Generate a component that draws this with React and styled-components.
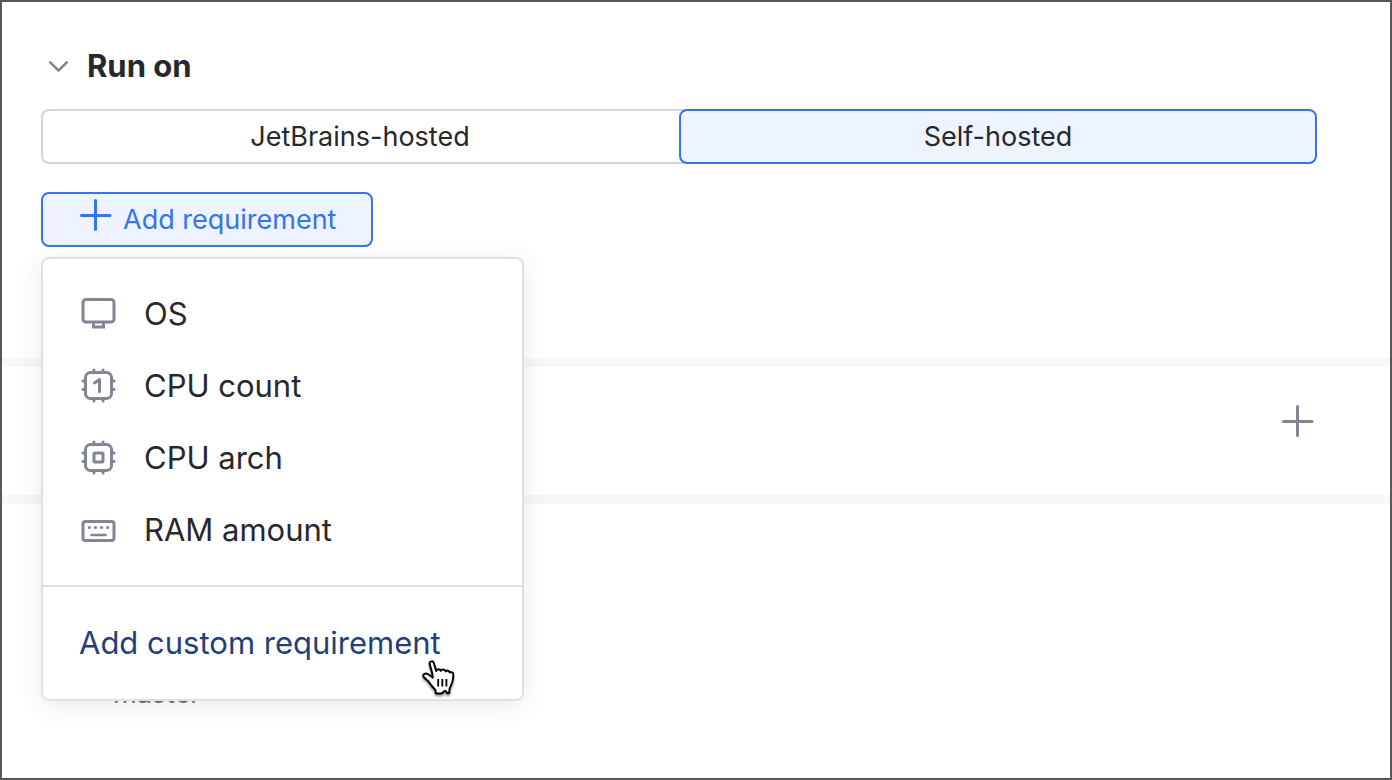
import React from 'react';
import styled, { createGlobalStyle } from 'styled-components';

const GlobalStyle = createGlobalStyle`
    * {
      box-sizing: border-box;
    }

    body {
      margin: 0;
      background-color: white;
      color: #27282c;
      font-family: Inter, "Liberation Sans", sans-serif;
    }

    button {
      margin: 0;
      padding: 0;
      border: none;
      background: none;
      color: inherit;
      font: inherit;
      cursor: pointer;
    }
`;

const Page = styled.main`
    display: flex;
    flex-direction: column;
    min-height: 100vh;
    border: 2px solid #58585b;
`;

const Section = styled.section`
    padding: ${(props) => props.$padding};
    border-bottom: ${(props) => (props.$last ? 'none' : '9px solid #f6f7f9')};
`;

const SectionHeader = styled.button`
    display: flex;
    align-items: center;
    gap: 16px;
    padding-left: 6px;
`;

const Title = styled.h2`
    margin: 0;
    font-size: 31px;
    line-height: 40px;
    font-weight: 700;
`;

const Segments = styled.div`
    display: flex;
    margin: 23px 0 28px;
`;

const Segment = styled.button`
    flex: 1;
    height: 55px;
    border: 2px solid ${(props) => (props.$active ? '#3574f0' : '#d3d5db')};
    border-radius: 8px;
    background-color: ${(props) => (props.$active ? '#edf3ff' : 'white')};
    font-size: 27px;
    line-height: 36px;

    &:first-child {
      margin-right: -6px;
      padding-right: 8px;
      border-right: none;
      border-top-right-radius: 0;
      border-bottom-right-radius: 0;
    }

    &:last-child {
      z-index: 1;
    }
`;

const Dropdown = styled.div`
    position: relative;
    width: max-content;
`;

const AddButton = styled.button`
    display: flex;
    align-items: center;
    gap: 10px;
    height: 55px;
    padding: 0 35px 0 36px;
    border: 2px solid #3574f0;
    border-radius: 8px;
    background-color: #edf3ff;
    color: #3574f0;
    font-size: 27px;
    line-height: 36px;

    svg {
      margin-bottom: 9px;
    }
`;

const Menu = styled.div`
    position: absolute;
    top: calc(100% + 10px);
    left: 0;
    z-index: 2;
    width: 483px;
    border: 2px solid #dfe0e5;
    border-radius: 8px;
    background-color: white;
    box-shadow: 0 4px 24px rgba(39, 50, 60, 0.1);
`;

const MenuList = styled.ul`
    margin: 0;
    padding: 19px 0;
    border-bottom: 2px solid #dfe0e5;
    list-style: none;
`;

const MenuItem = styled.button`
    display: flex;
    align-items: center;
    gap: 26px;
    width: 100%;
    height: 72px;
    padding: 0 35px;
    font-size: 31px;
    line-height: 40px;
    text-align: left;

    svg {
      color: #818594;
    }
`;

const CustomItem = styled(MenuItem)`
    height: 112px;
    padding: 0 36px;
    color: #233f7b;
`;

const Pointer = styled.svg`
    position: absolute;
    right: 64px;
    bottom: 1px;
    pointer-events: none;
`;

const Toolbar = styled.div`
    display: flex;
    justify-content: flex-end;
`;

const IconButton = styled.button`
    display: flex;
    align-items: center;
    justify-content: center;
    width: 38px;
    height: 40px;
    color: #818594;
`;

const Branch = styled.p`
    margin: 0;
    color: #6c707e;
    font-size: 27px;
    line-height: 36px;
`;

const ChevronIcon = () => (
  <svg width="24" height="24" viewBox="0 0 24 24" fill="none" stroke="#818594" strokeWidth="2.6" strokeLinecap="round" strokeLinejoin="round" aria-hidden="true">
    <path d="M3.2 8.3 11.5 16.5 19.8 8.3" />
  </svg>
);

const PlusIcon = () => (
  <svg width="34" height="34" viewBox="0 0 34 34" fill="none" stroke="currentColor" strokeWidth="3" strokeLinecap="round" aria-hidden="true">
    <path d="M16.5 2.5V31.5M2.5 17.5H31" />
  </svg>
);

const MonitorIcon = () => (
  <svg width="40" height="40" viewBox="0 0 40 40" fill="none" stroke="currentColor" strokeWidth="3" aria-hidden="true">
    <rect x="5" y="5.5" width="31" height="22.5" rx="3" />
    <path d="M15.5 28V33H25.5V28" />
  </svg>
);

const Chip = ({ children }) => (
  <svg width="40" height="40" viewBox="0 0 40 40" fill="none" stroke="currentColor" strokeWidth="3" strokeLinecap="round" strokeLinejoin="round" aria-hidden="true">
    <g transform="translate(0.5 -0.5)">
      <rect x="7" y="7" width="26" height="26" rx="5" />
      <path d="M15.5 7V4.5M24.5 7V4.5M15.5 33V35.5M24.5 33V35.5M7 15.5H4.5M7 24H4.5M33 15.5H35.5M33 24H35.5" />
      {children}
    </g>
  </svg>
);

const CpuCountIcon = () => (
  <Chip>
    <path d="M16 17.5 21 14V26" />
  </Chip>
);

const CpuArchIcon = () => (
  <Chip>
    <rect x="15.5" y="15.5" width="9" height="9" rx="1" />
  </Chip>
);

const MemoryIcon = () => (
  <svg width="40" height="40" viewBox="0 0 40 40" fill="none" stroke="currentColor" strokeWidth="3" strokeLinecap="round" aria-hidden="true">
    <rect x="5" y="11.5" width="31" height="19" rx="2.5" />
    <path d="M11.3 17.5H11.4M17.4 17.5H17.5M23.5 17.5H23.6M29.6 17.5H29.7" />
    <path d="M13.5 25H27.5" strokeWidth="2.6" />
  </svg>
);

const requirements = [
  { label: 'OS', Icon: MonitorIcon },
  { label: 'CPU count', Icon: CpuCountIcon },
  { label: 'CPU arch', Icon: CpuArchIcon },
  { label: 'RAM amount', Icon: MemoryIcon },
];

const HandPointer = () => (
  <Pointer width="38" height="40" viewBox="0 0 38 40" aria-hidden="true">
    <path
      d="M9.6 5.8C9.2 3 12.9 2.4 13.8 5L16.2 13C16.8 10.6 20 10.6 20.8 12.8C22 11 24.8 11.2 25.6 13.4C27 12 29 12.6 29.8 14.4C31.5 13.5 33.6 14.6 33.3 17.5C33 23 32.5 25.5 30 29.5C29.2 31 29.4 33 29.3 35C27.5 35.6 26.6 35 25.6 33C24.6 32.4 23.8 33.2 22.6 35C20.5 35.6 17 35.6 15.6 35C15.4 33.5 16 32.6 15 31.4C11.8 28.4 10.4 26 8.4 23.4C7 21.8 4.4 20.4 3.4 18.6C2.6 15.8 5.6 14.8 7.8 16.2C9.6 17 11 18.6 12.8 19.6C12.8 15 10.8 11 9.6 5.8Z"
      fill="white"
      stroke="black"
      strokeWidth="2"
      strokeLinejoin="round"
      filter="drop-shadow(0 2px 1px rgba(0, 0, 0, 0.4))"
    />
    <path d="M18.2 21V28.5M22.3 21V28.5M26.4 21V28.5" stroke="black" strokeWidth="1.8" />
  </Pointer>
);

class App extends React.Component {
  constructor(props) {
    super(props);
    this.state = { host: 'Self-hosted', open: true };
  }

  renderMenu() {
    return (
      <Menu>
        <MenuList>
          {requirements.map(({ label, Icon }) => (
            <li key={label}>
              <MenuItem type="button">
                <Icon />
                {label}
              </MenuItem>
            </li>
          ))}
        </MenuList>
        <CustomItem type="button">Add custom requirement</CustomItem>
        <HandPointer />
      </Menu>
    );
  }

  render() {
    const { host, open } = this.state;
    return (
      <Page>
        <GlobalStyle />
        <Section $padding="44px 73px 111px 39px">
          <SectionHeader type="button" aria-expanded="true">
            <ChevronIcon />
            <Title>Run on</Title>
          </SectionHeader>
          <Segments>
            {['JetBrains-hosted', 'Self-hosted'].map((name) => (
              <Segment
                key={name}
                type="button"
                $active={host === name}
                aria-pressed={host === name}
                onClick={() => this.setState({ host: name })}
              >
                {name}
              </Segment>
            ))}
          </Segments>
          <Dropdown>
            <AddButton type="button" aria-expanded={open} onClick={() => this.setState({ open: !open })}>
              <PlusIcon />
              Add requirement
            </AddButton>
            {open && this.renderMenu()}
          </Dropdown>
        </Section>
        <Section $padding="34px 73px 54px 39px">
          <Toolbar>
            <IconButton type="button" aria-label="Add">
              <PlusIcon />
            </IconButton>
          </Toolbar>
        </Section>
        <Section $last $padding="172px 73px 0 111px">
          <Branch>master</Branch>
        </Section>
      </Page>
    );
  }
}

export default App;
